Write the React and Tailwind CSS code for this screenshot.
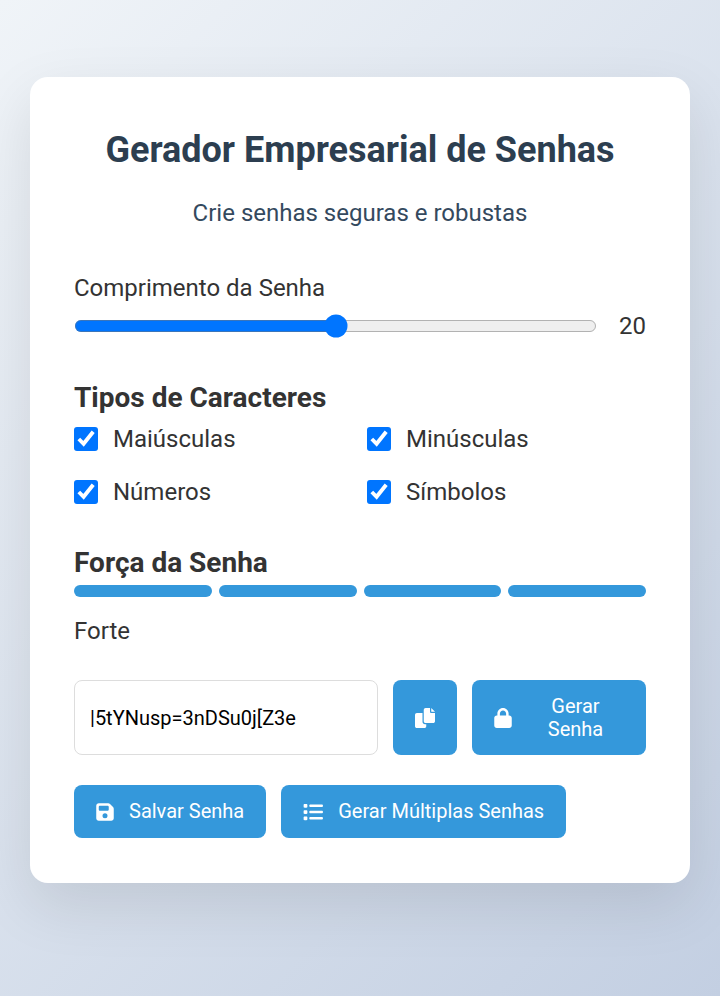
import { useState } from "react";
import { FaFloppyDisk, FaList, FaLock } from "react-icons/fa6";

const TYPES = ["Maiúsculas", "Minúsculas", "Números", "Símbolos"];

const buttonClass =
  "flex min-h-[53px] cursor-pointer items-center justify-center gap-[15px] rounded-lg bg-[#3498db] px-[22px] py-[14px] text-[20px] leading-[23px] text-white hover:bg-[#2980b9]";

function CopyIcon() {
  return (
    <svg viewBox="0 0 512 512" className="size-5" fill="currentColor" aria-hidden="true">
      <path d="M384 96L384 0h-112c-26.51 0-48 21.49-48 48v288c0 26.51 21.49 48 48 48H464c26.51 0 48-21.49 48-48V128h-95.1C398.4 128 384 113.6 384 96zM416 0v96h96L416 0zM192 352V128h-144c-26.51 0-48 21.49-48 48v288c0 26.51 21.49 48 48 48h192c26.51 0 48-21.49 48-48L288 416h-32C220.7 416 192 387.3 192 352z" />
    </svg>
  );
}

export default function App() {
  const [length, setLength] = useState(20);

  return (
    <div className="flex min-h-screen items-center justify-center bg-linear-[135deg,#f0f4f8_0%,#c3cfe2_100%] px-[30px] pt-6 pb-[60px] font-[Roboto,sans-serif] text-[24px] leading-[38px] text-[#333333]">
      <main className="w-full max-w-[750px] rounded-[18px] bg-white p-11 pb-[45px] shadow-[0_22px_60px_rgba(0,0,0,0.1)]">
        <header className="mb-[37px] text-center">
          <h1 className="mb-[15px] text-[36px] leading-[58px] font-bold text-[#2c3e50]">
            Gerador Empresarial de Senhas
          </h1>
          <p className="text-[#34495e]">Crie senhas seguras e robustas</p>
        </header>

        <section className="mb-[30px]">
          <label htmlFor="length" className="block">
            Comprimento da Senha
          </label>
          <div className="flex items-center gap-[22px]">
            <input
              id="length"
              type="range"
              min="8"
              max="32"
              value={length}
              onChange={(e) => setLength(Number(e.target.value))}
              className="min-w-0 flex-1 [zoom:1.5]"
            />
            <output htmlFor="length">{length}</output>
          </div>
        </section>

        <section className="mb-[30px]">
          <h2 className="text-[28px] leading-[45px] font-bold">Tipos de Caracteres</h2>
          <div className="grid grid-cols-2 gap-x-[14px] gap-y-[15px]">
            {TYPES.map((type) => (
              <label key={type} className="flex items-center gap-[15px]">
                <input type="checkbox" defaultChecked className="size-4 [zoom:1.5]" />
                {type}
              </label>
            ))}
          </div>
        </section>

        <section className="mb-[30px]">
          <h2 className="text-[28px] leading-[44px] font-bold">Força da Senha</h2>
          <div className="mb-[15px] grid grid-cols-4 gap-[7px]">
            <span className="h-3 rounded-md bg-[#3498db]" />
            <span className="h-3 rounded-md bg-[#3498db]" />
            <span className="h-3 rounded-md bg-[#3498db]" />
            <span className="h-3 rounded-md bg-[#3498db]" />
          </div>
          <p>Forte</p>
        </section>

        <div className="mb-[30px] flex gap-[15px]">
          <input
            type="text"
            readOnly
            aria-label="Senha gerada"
            value="|5tYNusp=3nDSu0j[Z3e"
            className="h-[75px] min-w-0 flex-1 rounded-lg border border-[#dddddd] px-[15px] text-[20px] text-black"
          />
          <button type="button" aria-label="Copiar senha" className={buttonClass}>
            <CopyIcon />
          </button>
          <button type="button" className={buttonClass + " w-[174px]"}>
            <FaLock className="w-[18px] shrink-0" />
            <span className="flex-1">Gerar Senha</span>
          </button>
        </div>

        <div className="flex flex-wrap gap-[15px]">
          <button type="button" className={buttonClass}>
            <FaFloppyDisk className="w-[18px]" />
            Salvar Senha
          </button>
          <button type="button" className={buttonClass}>
            <FaList />
            Gerar Múltiplas Senhas
          </button>
        </div>
      </main>
    </div>
  );
}
